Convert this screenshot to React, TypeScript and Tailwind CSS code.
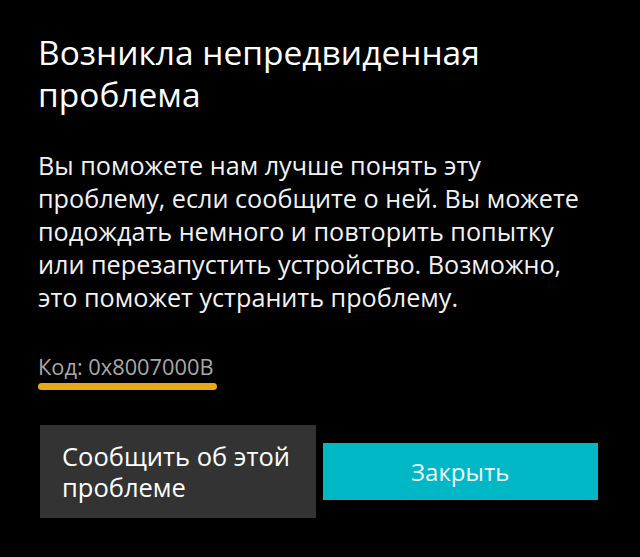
import React from "react";

export default function App() {
  return (
    <div
      className="w-[640px] h-[557px] bg-black text-white overflow-hidden"
      style={{ fontFamily: '"Open Sans", "Noto Sans", sans-serif' }}
    >
      <div className="ml-[38px] w-[560px] pt-[31px]">
        <h1 className="text-[33.5px] leading-[42px] font-normal">
          Возникла непредвиденная проблема
        </h1>
        <p className="mt-[34px] text-[25.2px] leading-[33px] text-[#f2f2f2] whitespace-nowrap">
          Вы поможете нам лучше понять эту
          <br />
          проблему, если сообщите о ней. Вы можете
          <br />
          подождать немного и повторить попытку
          <br />
          или перезапустить устройство. Возможно,
          <br />
          это поможет устранить проблему.
        </p>
        <div className="mt-[40px] inline-flex flex-col">
          <span className="text-[21.8px] leading-[26px] text-[#a8a8a8]">
            Код: 0x8007000B
          </span>
          <div className="mt-[3px] h-[7px] w-[179px] rounded-full bg-[#e9a81a]" />
        </div>
        <div className="mt-[35px] ml-[2px] grid grid-cols-2 gap-[7px] items-center">
          <button className="h-[93px] bg-[#333333] text-left pl-[22px] pr-2 text-[25.5px] leading-[31px] text-white">
            Сообщить об этой проблеме
          </button>
          <button className="h-[57px] bg-[#00b7c6] text-[24px] leading-[57px] text-[#eefbfc]">
            Закрыть
          </button>
        </div>
      </div>
    </div>
  );
}
